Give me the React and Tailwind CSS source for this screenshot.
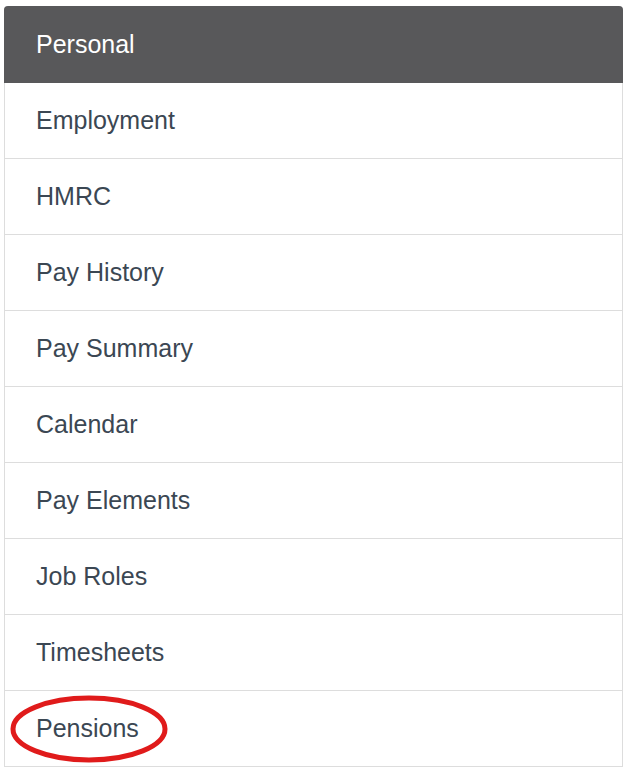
import React from "react";

const items = [
  "Employment",
  "HMRC",
  "Pay History",
  "Pay Summary",
  "Calendar",
  "Pay Elements",
  "Job Roles",
  "Timesheets",
  "Pensions",
];

export default function App() {
  return (
    <div
      className="min-h-[770px] w-[631px] bg-white pt-[6px] pl-[4px]"
      style={{ fontFamily: '"Liberation Sans", Arial, sans-serif' }}
    >
      <div className="w-[619px] rounded-t-[4px] border-l border-r border-[#dddddd]">
        {/* Header */}
        <div className="-mx-px flex h-[77px] items-center rounded-t-[4px] bg-[#58585a] pl-[32px] text-[25px] text-white">
          Personal
        </div>

        {/* Menu rows */}
        {items.map((item) => (
          <div
            key={item}
            className="relative flex h-[76px] items-center border-b border-[#dddddd] bg-white pt-px pl-[31px] text-[25px] text-[#3b4753]"
          >
            {item}
            {item === "Pensions" && (
              <svg
                className="pointer-events-none absolute left-[5px] top-[3px]"
                width="160"
                height="70"
                viewBox="0 0 160 70"
              >
                <ellipse
                  cx="79"
                  cy="35"
                  rx="76"
                  ry="31"
                  fill="none"
                  stroke="#e01b1b"
                  strokeWidth="5"
                />
              </svg>
            )}
          </div>
        ))}
      </div>
    </div>
  );
}
